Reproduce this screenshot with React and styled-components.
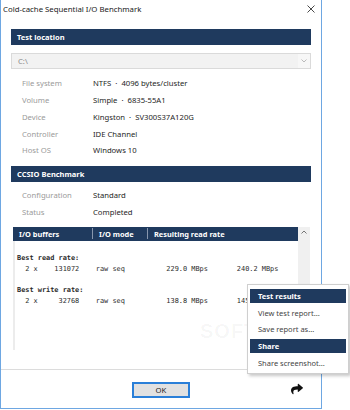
import React from "react";
import styled, { createGlobalStyle } from "styled-components";
import { FaShare } from "react-icons/fa";

const GlobalStyle = createGlobalStyle`
  *, *::before, *::after {
    box-sizing: border-box;
  }
  html, body {
    margin: 0;
    padding: 0;
    background: #ffffff;
  }
  body {
    font-family: "Noto Sans", "Open Sans", sans-serif;
  }
`;

const NAVY = "#1f3a5e";

const Page = styled.div`
  width: 350px;
  height: 410px;
  background: #fff;
  position: relative;
  overflow: hidden;
`;

const Window = styled.div`
  width: 322px;
  height: 409px;
  border: 1px solid #6ea7e2;
  border-top: none;
  background: #fff;
  display: flex;
  flex-direction: column;
`;

const TitleBar = styled.div`
  height: 20px;
  flex: 0 0 auto;
  display: flex;
  align-items: center;
  justify-content: space-between;
  padding: 0 6px 3px 2px;
  font-size: 7.8px;
  color: #1a1a1a;
`;

const Main = styled.div`
  flex: 0 0 auto;
  height: 350px;
  padding: 0 10px;
  border-bottom: 1px solid #dcdcdc;
  display: flex;
  flex-direction: column;
`;

const SectionHeader = styled.div`
  flex: 0 0 auto;
  height: 16px;
  margin-top: ${(p) => p.$top}px;
  background: ${NAVY};
  color: #fff;
  font-weight: 700;
  font-size: 7.5px;
  display: flex;
  align-items: center;
  padding-left: 6px;
`;

const Select = styled.div`
  flex: 0 0 auto;
  margin-top: 8px;
  height: 16px;
  border: 1px solid #dadada;
  background: #f2f2f2;
  display: flex;
  align-items: center;
  justify-content: space-between;
  font-size: 7.7px;
  color: #8a8a8a;
  padding-left: 6px;
`;

const Chevron = styled.span`
  width: 12px;
  height: 14px;
  background: #f7f7f7;
  display: flex;
  align-items: center;
  justify-content: center;
`;

const InfoList = styled.div`
  flex: 0 0 auto;
  margin-top: ${(p) => p.$top}px;
  padding-left: 11px;
`;

const InfoRow = styled.div`
  height: 16.75px;
  display: flex;
  align-items: center;
  font-size: 7.7px;
`;

const Label = styled.span`
  width: 71px;
  color: #9a9a9a;
`;

const Value = styled.span`
  color: #1e1e1e;
`;

const Dot = styled.span`
  padding: 0 4px;
`;

const Table = styled.div`
  flex: 0 0 auto;
  margin: 6.5px 1px 0 2px;
  height: 123px;
  display: flex;
`;

const TableMain = styled.div`
  flex: 1;
  display: flex;
  flex-direction: column;
`;

const TableHead = styled.div`
  height: 14px;
  background: ${NAVY};
  color: #fff;
  font-weight: 700;
  font-size: 7.4px;
  display: grid;
  grid-template-columns: 79px 55px 1fr;
  align-items: center;
`;

const HeadCell = styled.div`
  padding-left: 6px;
  border-left: ${(p) => (p.$first ? "none" : "1px solid #8796ad")};
  height: 11px;
  display: flex;
  align-items: center;
`;

const TableBody = styled.div`
  flex: 1;
  border-left: 2px solid #ececec;
  padding: 12px 0 0 2px;
  font-family: "DejaVu Sans Mono", "Liberation Mono", monospace;
  font-size: 6.9px;
  line-height: 10.8px;
  color: #2a2a2a;
  overflow: hidden;
`;

const ReportLine = styled.div`
  white-space: pre;
  height: 10.8px;
  font-weight: ${(p) => (p.$bold ? 700 : 400)};
`;

const Scrollbar = styled.div`
  width: 12px;
  background: #f0f0f0;
  display: flex;
  justify-content: center;
  padding-top: 3px;
`;

const Footer = styled.div`
  flex: 1;
  display: grid;
  grid-template-columns: 1fr auto 1fr;
  align-items: center;
`;

const OkButton = styled.button`
  width: 58px;
  height: 16px;
  margin-top: 1px;
  border: 2px solid #2a7fd8;
  background: #e1e1e1;
  font-family: "Noto Sans", sans-serif;
  font-size: 7.7px;
  color: #222;
  padding: 0;
`;

const ShareSlot = styled.div`
  justify-self: end;
  padding-right: 18px;
  display: flex;
  color: #111;
`;

const Menu = styled.div`
  position: absolute;
  left: 247px;
  top: 284px;
  width: 102px;
  padding: 2px 0;
  background: #fff;
  border: 1px solid #cfcfcf;
  box-shadow: 2px 2px 3px rgba(0, 0, 0, 0.22);
  font-size: 7.5px;
`;

const MenuHeader = styled.div`
  height: 14px;
  margin: 2px;
  background: ${NAVY};
  color: #fff;
  font-weight: 700;
  display: flex;
  align-items: center;
  padding-left: 8px;
`;

const MenuItem = styled.div`
  height: 16px;
  display: flex;
  align-items: center;
  padding-left: 10px;
  color: #444;
`;

const Watermark = styled.div`
  position: absolute;
  left: 200px;
  top: 320px;
  font-family: "Liberation Sans", sans-serif;
  font-size: 20px;
  font-weight: 700;
  letter-spacing: 1px;
  color: rgba(0, 0, 0, 0.04);
`;

const report = [
  ["Best read rate:", true],
  ["  2 x    131072    raw seq          229.0 MBps       240.2 MBps", false],
  ["", false],
  ["Best write rate:", true],
  ["  2 x     32768    raw seq          138.8 MBps       145.", false],
];

const testInfo = [
  ["File system", ["NTFS", "4096 bytes/cluster"]],
  ["Volume", ["Simple", "6835-55A1"]],
  ["Device", ["Kingston", "SV300S37A120G"]],
  ["Controller", ["IDE Channel"]],
  ["Host OS", ["Windows 10"]],
];

const benchInfo = [
  ["Configuration", ["Standard"]],
  ["Status", ["Completed"]],
];

function InfoRows({ rows, top }) {
  return (
    <InfoList $top={top}>
      {rows.map(([k, parts]) => (
        <InfoRow key={k}>
          <Label>{k}</Label>
          <Value>
            {parts.map((p, i) => (
              <React.Fragment key={p}>
                {i > 0 && <Dot>·</Dot>}
                {p}
              </React.Fragment>
            ))}
          </Value>
        </InfoRow>
      ))}
    </InfoList>
  );
}

function App() {
  return (
    <Page>
      <GlobalStyle />
      <Window>
        <TitleBar>
          <span>Cold-cache Sequential I/O Benchmark</span>
          <svg width="8" height="8" viewBox="0 0 8 8">
            <path d="M0.5 0.5L7.5 7.5M7.5 0.5L0.5 7.5" stroke="#333" strokeWidth="0.9" />
          </svg>
        </TitleBar>
        <Main>
          <SectionHeader $top={9}>Test location</SectionHeader>
          <Select>
            <span>C:\</span>
            <Chevron>
              <svg width="6" height="4" viewBox="0 0 6 4">
                <path d="M0.5 0.5L3 3L5.5 0.5" stroke="#aaa" strokeWidth="0.8" fill="none" />
              </svg>
            </Chevron>
          </Select>
          <InfoRows rows={testInfo} top={6} />
          <SectionHeader $top={7}>CCSIO Benchmark</SectionHeader>
          <InfoRows rows={benchInfo} top={5} />
          <Table>
            <TableMain>
              <TableHead>
                <HeadCell $first>I/O buffers</HeadCell>
                <HeadCell>I/O mode</HeadCell>
                <HeadCell>Resulting read rate</HeadCell>
              </TableHead>
              <TableBody>
                {report.map(([line, bold], i) => (
                  <ReportLine key={i} $bold={bold}>
                    {line}
                  </ReportLine>
                ))}
              </TableBody>
            </TableMain>
            <Scrollbar>
              <svg width="6" height="4" viewBox="0 0 6 4">
                <path d="M0.5 3.5L3 1L5.5 3.5" stroke="#666" strokeWidth="0.9" fill="none" />
              </svg>
            </Scrollbar>
          </Table>
        </Main>
        <Footer>
          <span />
          <OkButton>OK</OkButton>
          <ShareSlot>
            <FaShare size={12} />
          </ShareSlot>
        </Footer>
      </Window>
      <Watermark>SOFTPEDIA</Watermark>
      <Menu>
        <MenuHeader>Test results</MenuHeader>
        <MenuItem>View test report...</MenuItem>
        <MenuItem>Save report as...</MenuItem>
        <MenuHeader>Share</MenuHeader>
        <MenuItem>Share screenshot...</MenuItem>
      </Menu>
    </Page>
  );
}

export default App;
